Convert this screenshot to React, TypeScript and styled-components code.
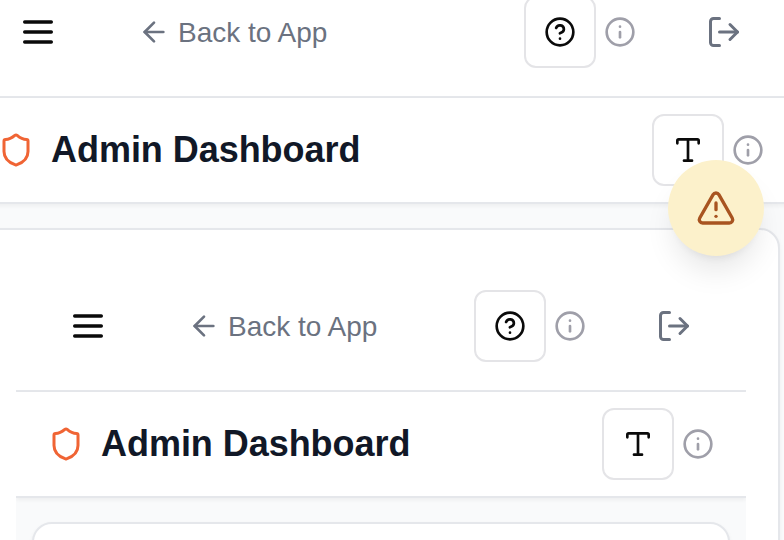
import React from "react";
import styled, { createGlobalStyle } from "styled-components";

const GlobalStyle = createGlobalStyle`
  * { box-sizing: border-box; }
  html, body { margin: 0; background: #f9fafb; overflow: hidden; }
  body { font-family: "Liberation Sans", Arial, Helvetica, sans-serif; }
`;

const Viewport = styled.main`
  width: 784px;
  height: 540px;
  overflow: hidden;
  background: #f9fafb;
`;

const Page = styled.div`
  width: 830px;
  margin: -32px 0 0 -34px;
`;

const Panel = styled.section`
  overflow: hidden;
  background: #f9fafb;
`;

const TopBar = styled.nav`
  display: flex;
  align-items: center;
  height: 130px;
  padding: 0 54px 0 52px;
  background: #fff;
  border-bottom: 2px solid #e5e7eb;
`;

const TitleBar = styled.header`
  display: flex;
  align-items: center;
  height: 106px;
  padding: 0 32px;
  background: #fff;
  border-bottom: 2px solid #e5e7eb;
  box-shadow: 0 2px 4px rgba(0, 0, 0, 0.05);
`;

const BackLink = styled.a`
  display: flex;
  align-items: center;
  gap: 8px;
  margin-left: 80px;
  color: #6b7280;
  font-size: 28px;
  line-height: 40px;
  white-space: nowrap;
`;

const BackLabel = styled.span`
  padding-top: 2px;
`;

const Title = styled.h1`
  margin: 0 0 0 17px;
  color: #111827;
  font-size: 36px;
  line-height: 56px;
  font-weight: 700;
  letter-spacing: -0.04px;
  white-space: nowrap;
`;

const Actions = styled.div`
  display: flex;
  align-items: center;
  gap: 8px;
  margin-left: auto;
`;

const IconButton = styled.button`
  display: flex;
  align-items: center;
  justify-content: center;
  width: 72px;
  height: 72px;
  padding: 0;
  color: #0a0a0a;
  background: #fff;
  border: 2px solid #e4e4e7;
  border-radius: 12px;
`;

const LogoutSlot = styled.div`
  display: flex;
  margin-left: 62px;
`;

const Body = styled.div`
  padding: 24px 16px;
`;

const Card = styled.div`
  min-height: 600px;
  padding: 32px;
  background: #fff;
  border: 2px solid #e5e7eb;
  border-radius: 20px;
  box-shadow: 0 2px 4px rgba(0, 0, 0, 0.05);
`;

const WarningButton = styled.button`
  position: fixed;
  left: 668px;
  top: 160px;
  display: flex;
  align-items: center;
  justify-content: center;
  width: 96px;
  height: 96px;
  padding: 0;
  color: #a85420;
  background: #fcf1cb;
  border: 0;
  border-radius: 50%;
  box-shadow: 0 20px 30px -6px rgba(0, 0, 0, 0.1), 0 8px 12px -8px rgba(0, 0, 0, 0.1);
`;

const Glyph = styled.svg<{ $size: number; $color?: string }>`
  flex: none;
  display: block;
  width: ${(p) => p.$size}px;
  height: ${(p) => p.$size}px;
  color: ${(p) => p.$color ?? "currentColor"};
  fill: none;
  stroke: currentColor;
  stroke-width: 2;
  stroke-linecap: round;
  stroke-linejoin: round;
`;

type IconProps = { size: number; color?: string; paths: string[]; ring?: boolean };

function Icon({ size, color, paths, ring }: IconProps) {
  return (
    <Glyph viewBox="0 0 24 24" $size={size} $color={color} aria-hidden="true">
      {ring && <circle cx="12" cy="12" r="10" />}
      {paths.map((d) => (
        <path key={d} d={d} />
      ))}
    </Glyph>
  );
}

const icons = {
  menu: ["M4 6h16", "M4 12h16", "M4 18h16"],
  back: ["m12 19-7-7 7-7", "M19 12H5"],
  help: ["M9.09 9a3 3 0 0 1 5.83 1c0 2-3 3-3 3", "M12 17h.01"],
  info: ["M12 16v-4", "M12 8h.01"],
  logout: ["M9 21H5a2 2 0 0 1-2-2V5a2 2 0 0 1 2-2h4", "m16 17 5-5-5-5", "M21 12H9"],
  shield: [
    "M20 13c0 5-3.5 7.5-7.66 8.95a1 1 0 0 1-.67-.01C7.5 20.5 4 18 4 13V6a1 1 0 0 1 1-1c2 0 4.5-1.2 6.24-2.72a1.17 1.17 0 0 1 1.52 0C14.51 3.81 17 5 19 5a1 1 0 0 1 1 1z",
  ],
  type: ["M12 4v16", "M4 7V5a1 1 0 0 1 1-1h14a1 1 0 0 1 1 1v2", "M9 20h6"],
  warning: [
    "m21.73 18-8-14a2 2 0 0 0-3.48 0l-8 14A2 2 0 0 0 4 21h16a2 2 0 0 0 1.73-3",
    "M12 9v4",
    "M12 17h.01",
  ],
};

function Dashboard({ children }: { children?: React.ReactNode }) {
  return (
    <Panel>
      <TopBar>
        <Icon size={40} color="#0a0a0a" paths={icons.menu} />
        <BackLink>
          <Icon size={32} paths={icons.back} />
          <BackLabel>Back to App</BackLabel>
        </BackLink>
        <Actions>
          <IconButton aria-label="Help">
            <Icon size={32} paths={icons.help} ring />
          </IconButton>
          <Icon size={32} color="#9f9fa9" paths={icons.info} ring />
          <LogoutSlot>
            <Icon size={36} color="#6b7280" paths={icons.logout} />
          </LogoutSlot>
        </Actions>
      </TopBar>
      <TitleBar>
        <Icon size={36} color="#f06434" paths={icons.shield} />
        <Title>Admin Dashboard</Title>
        <Actions>
          <IconButton aria-label="Text size">
            <Icon size={32} paths={icons.type} />
          </IconButton>
          <Icon size={32} color="#9f9fa9" paths={icons.info} ring />
        </Actions>
      </TitleBar>
      <Body>
        <Card>{children}</Card>
      </Body>
    </Panel>
  );
}

export default function App() {
  return (
    <Viewport>
      <GlobalStyle />
      <Page>
        <Dashboard>
          <Dashboard />
        </Dashboard>
      </Page>
      <WarningButton aria-label="Warnings">
        <Icon size={40} paths={icons.warning} />
      </WarningButton>
    </Viewport>
  );
}
